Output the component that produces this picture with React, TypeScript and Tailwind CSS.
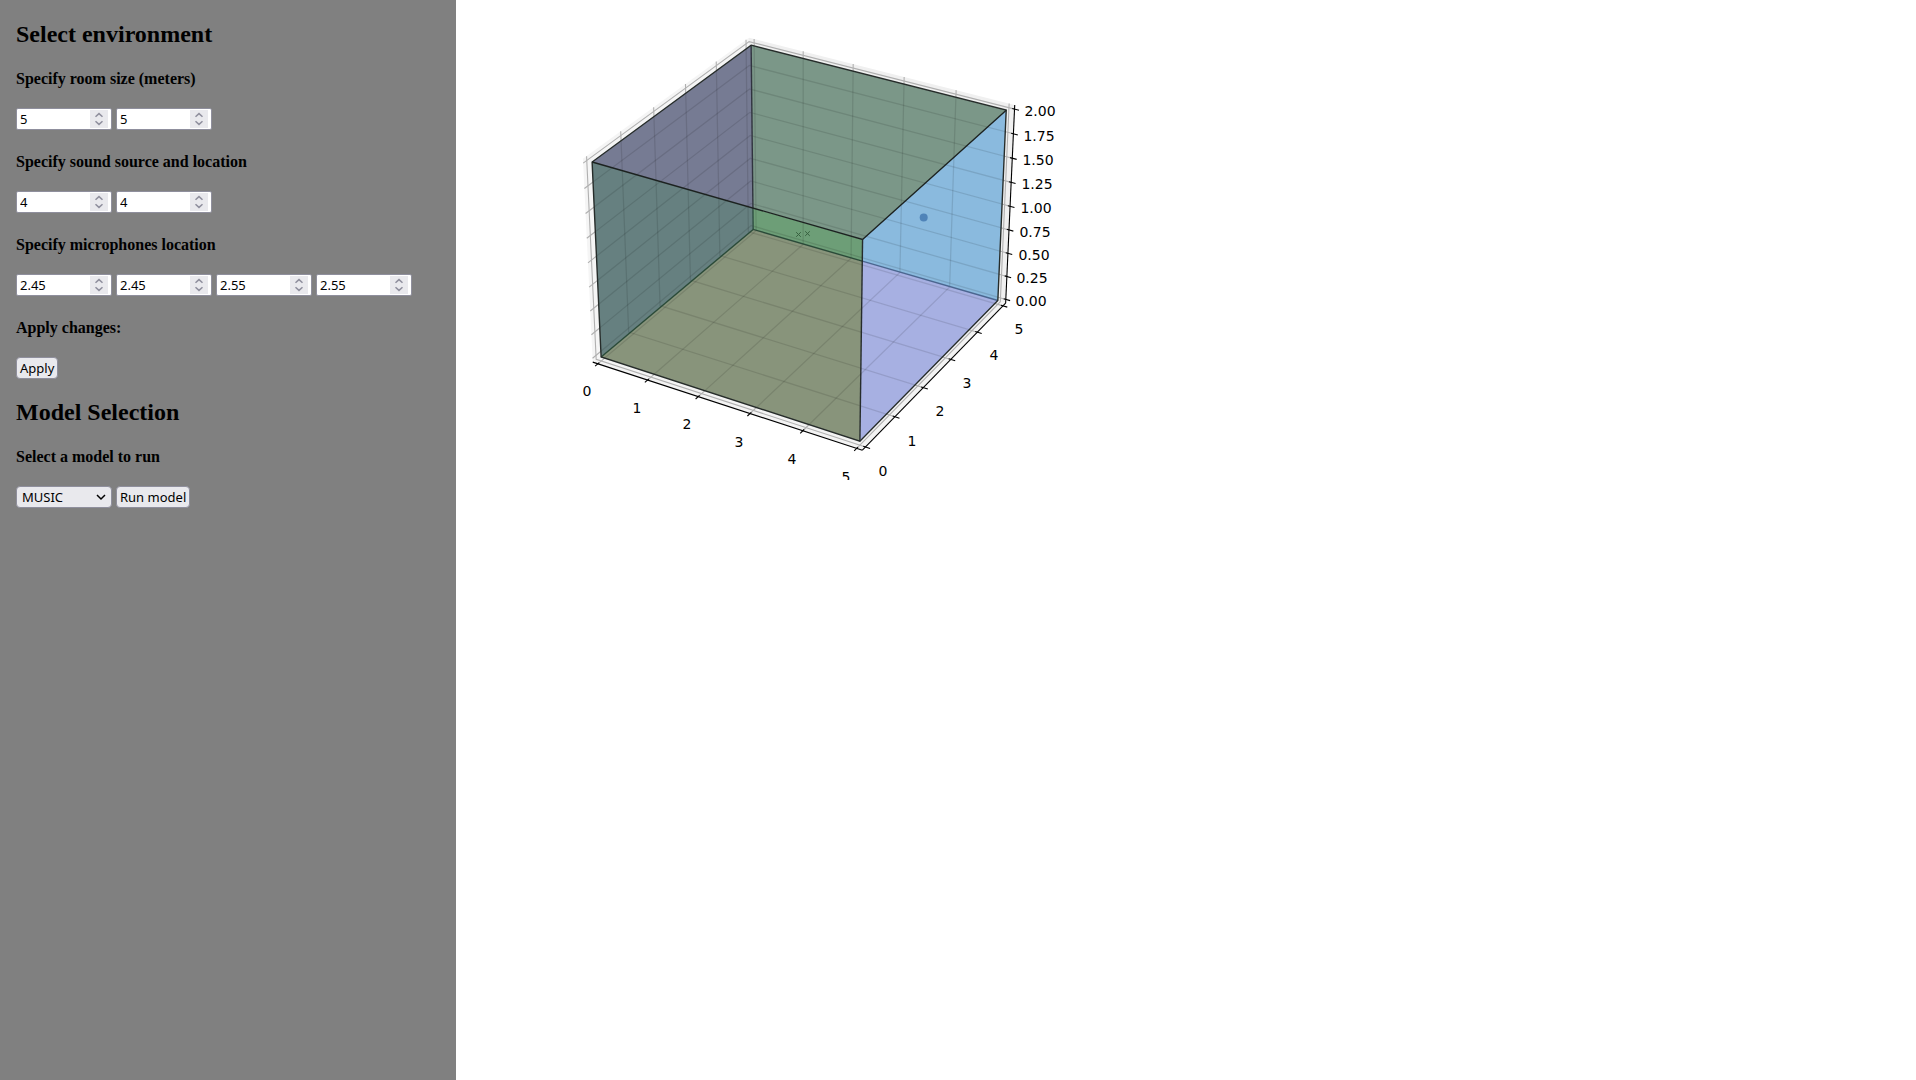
import { useId, useState } from "react";
import type { ReactNode } from "react";

type Vec3 = [number, number, number];
type Vec2 = [number, number];

/* ---------- 3D plot ---------- */

const ROOM: Vec3 = [5, 5, 2];
const ASPECT: Vec3 = [1.1428, 1.1428, 0.8571];
const DISTANCE = 10;
const SCALE = 2595;
const CENTER: Vec2 = [347, 234];

// Camera basis for elevation 30deg, azimuth -60deg
const RIGHT: Vec3 = [0.866, 0.5, 0];
const UP: Vec3 = [-0.25, 0.433, 0.866];
const OUT: Vec3 = [0.433, -0.75, 0.5];

const dot = (a: Vec3, b: Vec3) => a[0] * b[0] + a[1] * b[1] + a[2] * b[2];

function project(x: number, y: number, z: number): Vec2 {
  const p: Vec3 = [
    (x / ROOM[0] - 0.5) * ASPECT[0],
    (y / ROOM[1] - 0.5) * ASPECT[1],
    (z / ROOM[2] - 0.5) * ASPECT[2],
  ];
  const depth = DISTANCE - dot(p, OUT);
  return [
    CENTER[0] + (dot(p, RIGHT) / depth) * SCALE,
    CENTER[1] - (dot(p, UP) / depth) * SCALE,
  ];
}

const pts = (list: Vec2[]) => list.map(([x, y]) => `${x.toFixed(2)},${y.toFixed(2)}`).join(" ");

// Axis panes reach slightly past the data limits
const lo = -5 / 48;
const hi = 5 + 5 / 48;
const zlo = -2 / 48;
const zhi = 2 + 2 / 48;

const leftPane = [project(lo, lo, zlo), project(lo, hi, zlo), project(lo, hi, zhi), project(lo, lo, zhi)];
const backPane = [project(lo, hi, zlo), project(hi, hi, zlo), project(hi, hi, zhi), project(lo, hi, zhi)];
const floorPane = [project(lo, lo, zlo), project(hi, lo, zlo), project(hi, hi, zlo), project(lo, hi, zlo)];

const unitTicks = [0, 1, 2, 3, 4, 5];
const heightTicks = [0, 0.25, 0.5, 0.75, 1, 1.25, 1.5, 1.75, 2];

const gridLines: Vec2[][] = [
  ...unitTicks.map((t) => [project(t, lo, zlo), project(t, hi, zlo), project(t, hi, zhi)]),
  ...unitTicks.map((t) => [project(hi, t, zlo), project(lo, t, zlo), project(lo, t, zhi)]),
  ...heightTicks.map((t) => [project(lo, lo, t), project(lo, hi, t), project(hi, hi, t)]),
];

const outward = (5 / 12) * 0.2;
const inward = (5 / 12) * 0.1;
const tickMarks: Vec2[][] = [
  ...unitTicks.map((t) => [project(t, lo - outward, zlo), project(t, lo + inward, zlo)]),
  ...unitTicks.map((t) => [project(hi + outward, t, zlo), project(hi - inward, t, zlo)]),
  ...heightTicks.map((t) => [project(hi + outward, hi, t), project(hi - inward, hi, t)]),
];

const axisLines: Vec2[][] = [
  [project(lo, lo, zlo), project(hi, lo, zlo)],
  [project(hi, lo, zlo), project(hi, hi, zlo)],
  [project(hi, hi, zlo), project(hi, hi, zhi)],
];

// Room corners
const backTop = project(0, 5, 2);
const leftTop = project(0, 0, 2);
const rightTop = project(5, 5, 2);
const frontTop = project(5, 0, 2);
const backLow = project(0, 5, 0);
const leftLow = project(0, 0, 0);
const rightLow = project(5, 5, 0);
const frontLow = project(5, 0, 0);

function cross(a: Vec2, b: Vec2, c: Vec2, d: Vec2): Vec2 {
  const r = [b[0] - a[0], b[1] - a[1]];
  const s = [d[0] - c[0], d[1] - c[1]];
  const t = ((c[0] - a[0]) * s[1] - (c[1] - a[1]) * s[0]) / (r[0] * s[1] - r[1] * s[0]);
  return [a[0] + t * r[0], a[1] + t * r[1]];
}

const leftCross = cross(leftTop, frontTop, backTop, backLow);
const rightCross = cross(frontTop, frontLow, backLow, rightLow);

const regions: { fill: string; points: Vec2[] }[] = [
  { fill: "#767b93", points: [backTop, leftTop, leftCross] },
  { fill: "#668080", points: [leftTop, leftCross, backLow, leftLow] },
  { fill: "#7b9788", points: [backTop, rightTop, frontTop, leftCross] },
  { fill: "#6d9e77", points: [leftCross, frontTop, rightCross, backLow] },
  { fill: "#88947b", points: [backLow, rightCross, frontLow, leftLow] },
  { fill: "#8abade", points: [frontTop, rightTop, rightLow, rightCross] },
  { fill: "#a7b0e2", points: [rightCross, rightLow, frontLow] },
];

const outline = [backTop, rightTop, rightLow, frontLow, leftLow, leftTop];

const labels: [string, number, number][] = [
  ["0", 131, 391], ["1", 181, 408], ["2", 231, 424], ["3", 283, 442], ["4", 336, 459], ["5", 390, 477],
  ["0", 427, 471], ["1", 456, 441], ["2", 484, 411], ["3", 511, 383], ["4", 538, 355], ["5", 563, 329],
  ["0.00", 575, 301], ["0.25", 576, 278], ["0.50", 578, 255], ["0.75", 579, 232], ["1.00", 580, 208],
  ["1.25", 581, 184], ["1.50", 582, 160], ["1.75", 583, 136], ["2.00", 584, 111],
];

function Lines({ lines }: { lines: Vec2[][] }) {
  return (
    <>
      {lines.map((line, i) => (
        <polyline key={i} points={pts(line)} />
      ))}
    </>
  );
}

function RoomPlot() {
  return (
    <svg width="640" height="480" viewBox="0 0 640 480" role="img" aria-label="Room plot" className="block max-w-full">
      <defs>
        <clipPath id="room-outline">
          <polygon points={pts(outline)} />
        </clipPath>
      </defs>
      <polygon points={pts(leftPane)} fill="#f5f5f5" />
      <polygon points={pts(backPane)} fill="#f0f0f0" />
      <polygon points={pts(floorPane)} fill="#f3f3f3" />
      <g fill="none" stroke="#b0b0b0" strokeWidth="1.1">
        <Lines lines={gridLines} />
      </g>
      {regions.map((r) => (
        <polygon key={r.fill} points={pts(r.points)} fill={r.fill} />
      ))}
      <g clipPath="url(#room-outline)" fill="none" stroke="#000" strokeOpacity="0.11" strokeWidth="1.3">
        <Lines lines={gridLines} />
      </g>
      <g fill="none" strokeWidth="1.4">
        <polyline points={pts([leftCross, backLow])} stroke="#2f4f42" />
        <polyline points={pts([leftLow, backLow, rightCross])} stroke="#2a4a38" />
        <polyline points={pts([rightCross, rightLow])} stroke="#4b6690" />
        <polyline points={pts([backTop, leftCross])} stroke="#30343f" />
        <polygon points={pts(outline)} stroke="#262c2a" />
        <polyline points={pts([leftTop, frontTop, rightTop])} stroke="#1c2220" />
        <polyline points={pts([frontTop, frontLow])} stroke="#262c2c" />
      </g>
      <circle cx="467.7" cy="217.6" r="4" fill="#4f83b8" />
      <g stroke="#37603f" strokeWidth="1">
        <path d="M340.2 232.2l4.6 4.6m0-4.6l-4.6 4.6M349.2 231.3l4.6 4.6m0-4.6l-4.6 4.6" />
      </g>
      <g fill="none" stroke="#000" strokeWidth="1.1">
        <Lines lines={axisLines} />
        <Lines lines={tickMarks} />
      </g>
      <g className="text-[14px]" fontFamily="DejaVu Sans, sans-serif" textAnchor="middle" fill="#000">
        {labels.map(([text, x, y]) => (
          <text key={`${text}-${x}`} x={x} y={y + 5}>
            {text}
          </text>
        ))}
      </g>
    </svg>
  );
}

/* ---------- Sidebar ---------- */

function NumberField({ label, initial, step = 1 }: { label: string; initial: string; step?: number }) {
  const [value, setValue] = useState(initial);
  const bump = (d: number) => setValue((v) => String(Math.round((Number(v) + d) * 100) / 100));
  return (
    <span className="flex h-[22px] w-[96px] items-center rounded-[2px] border border-[#8f8f9d] bg-white pr-[3px]">
      <input
        type="number"
        step="any"
        aria-label={label}
        value={value}
        onChange={(e) => setValue(e.target.value)}
        className="h-full min-w-0 flex-1 appearance-none bg-transparent pl-[3px] text-[13px] leading-[18px] outline-none [-moz-appearance:textfield] [&::-webkit-inner-spin-button]:appearance-none"
      />
      <span className="flex h-[18px] w-[18px] flex-col bg-[#e9e9ed] text-[#8f8f9d]">
        <button type="button" tabIndex={-1} aria-label={`Increase ${label}`} onClick={() => bump(step)} className="h-[9px]">
          <svg width="18" height="9" viewBox="0 0 18 9" fill="none" stroke="currentColor" strokeWidth="1.5" className="block">
            <path d="M5.5 6.8L9 3.6l3.5 3.2" />
          </svg>
        </button>
        <button type="button" tabIndex={-1} aria-label={`Decrease ${label}`} onClick={() => bump(-step)} className="h-[9px]">
          <svg width="18" height="9" viewBox="0 0 18 9" fill="none" stroke="currentColor" strokeWidth="1.5" className="block">
            <path d="M5.5 2.2L9 5.4l3.5-3.2" />
          </svg>
        </button>
      </span>
    </span>
  );
}

function PushButton({ children }: { children: ReactNode }) {
  return (
    <button
      type="button"
      className="h-[22px] rounded-[4px] border border-[#8f8f9d] bg-[#e9e9ed] px-[3px] text-[13px] leading-[18px] hover:bg-[#d0d0d7]"
    >
      {children}
    </button>
  );
}

function Title({ children }: { children: ReactNode }) {
  return <h2 className="mt-[20px] font-['Liberation_Serif',serif] text-[24px] leading-[26px] font-bold">{children}</h2>;
}

function Group({ title, children }: { title: string; children: ReactNode }) {
  const id = useId();
  return (
    <section role="group" aria-labelledby={id} className="mt-[23px]">
      <h4 id={id} className="mb-[20px] font-['Liberation_Serif',serif] text-[16px] leading-[18px] font-bold">
        {title}
      </h4>
      <div className="flex gap-1">{children}</div>
    </section>
  );
}

export default function App() {
  return (
    <div className="flex min-h-screen bg-white font-['Noto_Sans',sans-serif] text-black">
      <aside className="flex w-[456px] shrink-0 flex-col bg-[#808080] px-4 pt-px">
        <Title>Select environment</Title>
        <Group title="Specify room size (meters)">
          <NumberField label="Room width" initial="5" />
          <NumberField label="Room length" initial="5" />
        </Group>
        <Group title="Specify sound source and location">
          <NumberField label="Source x" initial="4" />
          <NumberField label="Source y" initial="4" />
        </Group>
        <Group title="Specify microphones location">
          <NumberField label="Microphone 1 x" initial="2.45" step={0.05} />
          <NumberField label="Microphone 1 y" initial="2.45" step={0.05} />
          <NumberField label="Microphone 2 x" initial="2.55" step={0.05} />
          <NumberField label="Microphone 2 y" initial="2.55" step={0.05} />
        </Group>
        <Group title="Apply changes:">
          <PushButton>Apply</PushButton>
        </Group>
        <Title>Model Selection</Title>
        <Group title="Select a model to run">
          <span className="relative">
            <select
              aria-label="Model"
              className="block h-[22px] w-[96px] appearance-none rounded-[4px] border border-[#8f8f9d] bg-[#e9e9ed] pl-[5px] text-[13px] leading-[18px]"
            >
              <option>MUSIC</option>
            </select>
            <svg
              width="10"
              height="8"
              viewBox="0 0 10 8"
              fill="none"
              stroke="#000"
              strokeWidth="1.5"
              className="pointer-events-none absolute top-[7px] right-[6px]"
            >
              <path d="M1 2l4 4 4-4" />
            </svg>
          </span>
          <PushButton>Run model</PushButton>
        </Group>
      </aside>
      <main className="min-w-0 flex-1">
        <RoomPlot />
      </main>
    </div>
  );
}
